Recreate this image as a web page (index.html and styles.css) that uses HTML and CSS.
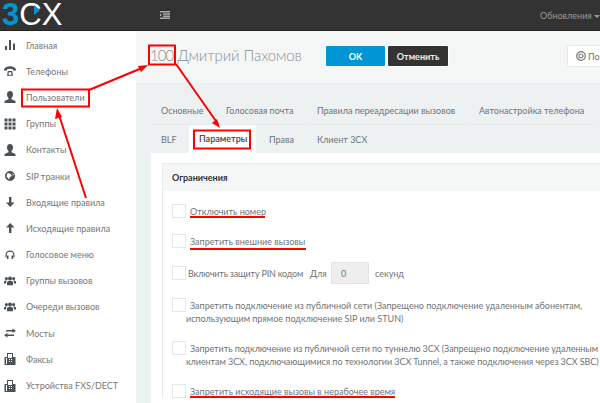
FILE: index.html
```html
<!DOCTYPE html>
<html lang="ru">
<head>
  <meta charset="UTF-8" />
  <meta name="viewport" content="width=device-width, initial-scale=1.0" />
  <title>3CX</title>
  <link rel="stylesheet" href="styles.css">
</head>
<body>
  <svg class="defs" width="0" height="0">
    <symbol id="i-person" viewBox="0 0 12 12"><path d="M6 0c2 0 3 1.500 3 3.500 0 1.500-.6 2.800-1.500 3.500v1.200L11.500 10v2H.5v-2l4-1.800V7C3.600 6.300 3 5 3 3.500 3 1.500 4 0 6 0z"/></symbol>
    <symbol id="i-people" viewBox="0 0 14 12"><circle cx="7" cy="3" r="2.300"/><circle cx="2.800" cy="3.200" r="1.800"/><circle cx="11.200" cy="3.200" r="1.800"/><path d="M3.500 11V8c0-1.500 1.500-2.300 3.500-2.300s3.500.8 3.500 2.300v3zM0 9V7c0-1 1-1.700 2.300-1.700.5 0 .8.100.8.100C2.500 6 2.500 7 2.500 9zM14 9V7c0-1-1-1.700-2.300-1.700-.5 0-.8.100-.8.100.6.600.6 1.600.6 3.600z"/></symbol>
    <symbol id="i-fax" viewBox="0 0 12 12"><path d="M3 0h6v4h2.500v8H.5V4H3zm1 1v4h4V1zM2 5v6h1V5zm3 1v1h1V6zm2 0v1h1V6zM5 8v1h1V8zm2 0v1h1V8z" fill-rule="evenodd"/></symbol>
  </svg>

  <div class="topbar">
    <div class="logo"><span class="logo-three">3</span><span class="logo-c">C<i class="logo-arrow"></i></span><span>X</span></div>
    <svg class="menu-toggle" width="10" height="8" viewBox="0 0 10 8"><path d="M0 0h10v1.500H0zM3 2.200h7v1.500H3zM3 4.400h7v1.500H3zM0 6.500h10V8H0zM0 2.500l2 1.500-2 1.500z"/></svg>
    <div class="updates">Обновления <span class="caret"></span></div>
  </div>

  <div class="layout">
    <ul class="sidebar">
      <li><svg class="ico" viewBox="0 0 12 12"><path d="M1 7h2v4H1zM5 1h2v10H5zM9 4.500h2V11H9z"/></svg>Главная</li>
      <li><svg class="ico" viewBox="0 0 14 12"><path d="M0 4C1 1.500 4 .5 7 .5s6 1 7 3.500v1.500h-3.500V4c-1-.5-2.200-.7-3.500-.7S4.500 3.500 3.500 4v1.500H0zM3.500 11.500l1-5.500h5l1 5.500zM7 7.200a1.800 1.800 0 1 0 0 3.600 1.800 1.800 0 0 0 0-3.600z" fill-rule="evenodd"/></svg>Телефоны</li>
      <li><svg class="ico"><use href="#i-person"/></svg>Пользователи</li>
      <li><svg class="ico" viewBox="0 0 12 12"><path d="M.5.500h3v3h-3zM4.500.500h3v3h-3zM8.500.500h3v3h-3zM.5 4.500h3v3h-3zM4.500 4.500h3v3h-3zM8.500 4.500h3v3h-3zM.5 8.500h3v3h-3zM4.500 8.500h3v3h-3zM8.500 8.500h3v3h-3z"/></svg>Группы</li>
      <li><svg class="ico"><use href="#i-person"/></svg>Контакты</li>
      <li><svg class="ico" viewBox="0 0 12 12"><path d="M6 1a5 5 0 1 0 0 10A5 5 0 0 0 6 1zM3.500 3l2.500.5 2 2.500-2 1-1 2.500L3.800 8 2.500 6.500zM8.500 3l1.500 2-1.200.5z" fill-rule="evenodd"/></svg>SIP транки</li>
      <li><svg class="ico" viewBox="0 0 12 12"><path d="M5 1h2.400v5.500H10.500L6.200 11 2 6.500h3z"/></svg>Входящие правила</li>
      <li><svg class="ico" viewBox="0 0 12 12"><path d="M6.200 1l4.300 4.500H7.400V11H5V5.500H2z"/></svg>Исходящие правила</li>
      <li><svg class="ico" viewBox="0 0 12 12"><path d="M6 1.500a4.500 4.500 0 0 0-4.500 4.500v2.500h1.200V6a3.300 3.300 0 0 1 6.600 0v2.500h1.200V6A4.500 4.500 0 0 0 6 1.500zM3 6.500h1.500V10H3zM7.500 6.500H9V10H7.500z"/></svg>Голосовое меню</li>
      <li><svg class="ico"><use href="#i-people"/></svg>Группы вызовов</li>
      <li><svg class="ico"><use href="#i-people"/></svg>Очереди вызовов</li>
      <li><svg class="ico" viewBox="0 0 12 12"><path d="M8.500 1.500L12 3.800 8.500 6V4.500H2v-1.400h6.500zM3.500 6L0 8.200l3.500 2.300V9H10V7.500H3.500z"/></svg>Мосты</li>
      <li><svg class="ico"><use href="#i-fax"/></svg>Факсы</li>
      <li><svg class="ico"><use href="#i-fax"/></svg>Устройства FXS/DECT</li>
    </ul>

    <div class="main">
      <div class="page-head">
        <h1 class="page-title"><span class="ext-number">100</span> Дмитрий Пахомов</h1>
        <button class="btn btn-ok">OK</button>
        <button class="btn btn-cancel">Отменить</button>
        <button class="btn btn-help"><svg width="10" height="10" viewBox="0 0 10 10"><circle cx="5" cy="5" r="4.300" fill="none" stroke="#777" stroke-width="1.200"/><circle cx="5" cy="5" r="2" fill="none" stroke="#777" stroke-width="1.200"/></svg>Помощь</button>
      </div>

      <div class="content">
        <div class="tabs tabs-top">
          <span class="tab tab-main">Основные</span>
          <span class="tab tab-voice">Голосовая почта</span>
          <span class="tab tab-forward">Правила переадресации вызовов</span>
          <span class="tab tab-auto">Автонастройка телефона</span>
        </div>
        <div class="tabs">
          <span class="tab tab-blf">BLF</span>
          <span class="tab tab-active">Параметры</span>
          <span class="tab tab-rights">Права</span>
          <span class="tab">Клиент 3CX</span>
        </div>

        <div class="tab-body">
          <div class="box">
            <div class="box-head">Ограничения</div>
            <div class="box-body">
              <div class="opt opt-short"><span class="check"></span><span class="opt-text">Отключить номер</span></div>
              <div class="opt opt-short"><span class="check"></span><span class="opt-text">Запретить внешние вызовы</span></div>
              <div class="opt opt-pin">
                <span class="check"></span><span class="pin-label">Включить защиту PIN кодом</span><span class="pin-for">Для</span><span class="pin-input">0</span><span>секунд</span>
              </div>
              <div class="opt-long"><span class="check"></span><p class="long-text">Запретить подключение из публичной сети (Запрещено подключение удаленным абонентам,<br>использующим прямое подключение SIP или STUN)</p></div>
              <div class="opt-long"><span class="check"></span><p class="long-text long-tight">Запретить подключение из публичной сети по туннелю 3CX (Запрещено подключение удаленным<br>клиентам 3CX, подключающимися по технологии 3CX Tunnel, а также подключения через 3CX SBC)</p></div>
              <div class="opt opt-short"><span class="check"></span><span class="opt-text">Запретить исходящие вызовы в нерабочее время</span></div>
            </div>
          </div>
        </div>
      </div>
    </div>
  </div>

  <svg class="marks" width="600" height="403" viewBox="0 0 600 403">
    <g fill="none" stroke="#f00" stroke-width="2">
      <rect x="22" y="89.500" width="67" height="17"/>
      <rect x="149" y="45.500" width="26" height="19"/>
      <rect x="194" y="130.500" width="56" height="18"/>
      <path d="M86 198L58 112M89 90L142 68M176 64L218 124"/>
    </g>
    <g fill="#f00">
      <path d="M57 108l5 9-7 2zM148 65l-7 7-3-6zM220 128l-8-5 5-4z"/>
      <path d="M190 216h75v2h-75zM190 248h116v2H190zM190 396h205v2H190z"/>
    </g>
  </svg>
</body>
</html>
```
FILE: styles.css
```css
html, body {
  margin: 0;
  padding: 0;
  height: 403px;
  overflow: hidden;
}
body {
  font-family: Lato, "Noto Sans", Arial, sans-serif;
  font-size: 9px;
  color: #6f7477;
  background: #fff;
  position: relative;
}
.defs {
  position: absolute;
}
.topbar {
  height: 31px;
  background: #333;
  display: flex;
  align-items: center;
  border-bottom: 1px solid #222;
  box-sizing: border-box;
}
.logo {
  width: 160px;
  flex: none;
  height: 26px;
  padding-left: 2px;
  box-sizing: border-box;
  font-family: "Liberation Sans", Arial, sans-serif;
  font-size: 31px;
  line-height: 26px;
  color: #fff;
}
.logo-three {
  color: #0096d6;
  font-weight: bold;
}
.logo-c {
  position: relative;
}
.logo-arrow {
  position: absolute;
  left: 15px;
  top: 8px;
  border-left: 6px solid #0096d6;
  border-top: 5px solid transparent;
  border-bottom: 5px solid transparent;
}
.menu-toggle {
  fill: #aaa;
}
.updates {
  margin-left: auto;
  width: 60px;
  flex: none;
  white-space: nowrap;
  color: #999;
}
.caret {
  display: inline-block;
  border-top: 3px solid #999;
  border-left: 3px solid transparent;
  border-right: 3px solid transparent;
  vertical-align: middle;
}
.layout {
  display: flex;
  height: 372px;
}
.sidebar {
  width: 136px;
  flex: none;
  margin: 0;
  padding: 1px 0 0;
  list-style: none;
  background: #fff;
}
.sidebar li {
  height: 26.2px;
  display: flex;
  align-items: center;
  white-space: nowrap;
  color: #777;
}
.ico {
  width: 12px;
  height: 12px;
  margin: 0 10px 0 4px;
  flex: none;
  fill: #4a5258;
}
.main {
  flex: 1;
  min-width: 0;
  background: #eef1f2;
}
.page-head {
  height: 53px;
  box-sizing: border-box;
  background: #f5f7f7;
  border-bottom: 1px solid #eceff0;
  padding: 13px 0 0 14px;
  display: flex;
  align-items: flex-start;
}
.page-title {
  margin: 0 23px 0 0;
  width: 152px;
  flex: none;
  font-size: 15px;
  letter-spacing: -.1px;
  line-height: 22px;
  font-weight: 300;
  color: #8a8f92;
  white-space: nowrap;
}
.ext-number {
  letter-spacing: -.9px;
}
.btn {
  height: 22px;
  flex: none;
  margin-top: 1px;
  border: 1px solid #fff;
  border-radius: 2px;
  padding: 0;
  font-family: inherit;
  font-size: 9px;
  font-weight: 700;
  box-sizing: border-box;
}
.btn-ok {
  width: 61px;
  background: #0096d6;
  color: #fff;
  margin-right: 1px;
}
.btn-cancel {
  width: 62px;
  background: #333;
  color: #eee;
  margin-right: 118px;
}
.btn-help {
  width: 70px;
  background: #fff;
  border-color: #e6e9ea;
  color: #6f7477;
  font-weight: 400;
  text-align: left;
  padding-left: 8px;
  display: flex;
  align-items: center;
  gap: 2px;
}
.content {
  padding: 0 0 0 15px;
}
.tabs {
  display: flex;
  height: 28px;
  align-items: center;
  white-space: nowrap;
}
.tabs-top {
  margin-top: 13px;
  align-items: stretch;
}
.tabs-top .tab {
  line-height: 28px;
  border-bottom: 1px solid #e6e9ea;
}
.tab {
  display: block;
  padding-left: 10px;
  flex: none;
  box-sizing: border-box;
}
.tab-main { width: 65px; }
.tab-voice { width: 88px; margin-right: 3px; }
.tab-forward { width: 158px; margin-right: 4px; }
.tab-auto { width: 125px; }
.tab-blf { width: 38px; }
.tab-active {
  width: 67px;
  height: 28px;
  line-height: 28px;
  background: #fff;
  color: #555;
  font-weight: 700;
}
.tab-rights { width: 51px; padding-left: 13px; }
.tab-body {
  background: #fff;
  padding: 10px 0 0 11px;
  height: 260px;
  box-sizing: border-box;
}
.box {
  width: 470px;
  border: 1px solid #e9ecec;
  border-bottom: none;
}
.box-head {
  height: 27px;
  line-height: 27px;
  padding-left: 9px;
  background: #f5f7f7;
  color: #333;
  font-weight: 700;
}
.box-body {
  padding: 13px 0 0 9px;
  width: 460px;
  white-space: nowrap;
}
.check {
  display: block;
  flex: none;
  width: 14px;
  height: 14px;
  box-sizing: border-box;
  border: 1px solid #e2e7e8;
  background: #fff;
}
.opt {
  display: flex;
  align-items: center;
}
.opt-short {
  height: 14px;
  margin-bottom: 16px;
}
.opt-text {
  margin-left: 4px;
}
.opt-pin {
  height: 22px;
  margin-top: -2px;
  margin-bottom: 14px;
}
.pin-label {
  margin-left: 2px;
  width: 122px;
  letter-spacing: -.2px;
}
.pin-for {
  width: 21px;
}
.pin-input {
  width: 38px;
  height: 22px;
  line-height: 22px;
  background: #eee;
  border: 1px solid #e2e5e6;
  box-sizing: border-box;
  padding-left: 9px;
  margin-right: 6px;
}
.opt-long {
  display: flex;
  margin-bottom: 16px;
}
.long-text {
  margin: 1px 0 0;
  line-height: 13px;
  text-indent: 4px;
}
.long-tight {
  letter-spacing: -.06px;
}
.marks {
  position: absolute;
  left: 0;
  top: 0;
}
```
